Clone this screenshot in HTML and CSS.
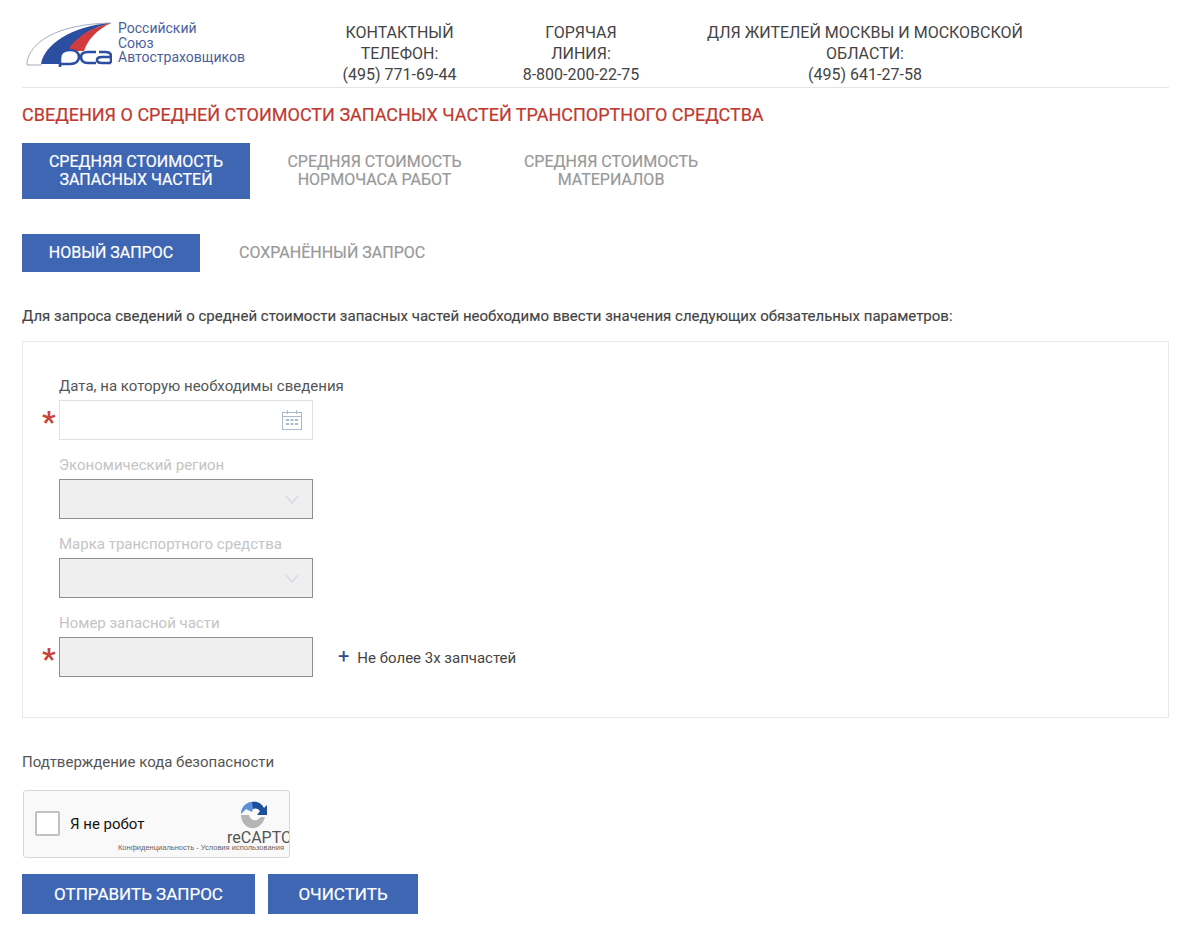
FILE: index.html
```html
<!DOCTYPE html>
<html lang="ru">
<head>
  <meta charset="UTF-8">
  <title>Сведения о средней стоимости запасных частей</title>
  <link rel="stylesheet" href="styles.css">
</head>
<body>
  <div class="page">
    <header class="header">
      <div class="logo">
        <svg class="logo-mark" width="86" height="46" viewBox="0 0 86 46">
          <path d="M1 42 C3 22 30 3 85 2" fill="none" stroke="#8b97b5" stroke-width="0.8"/>
          <path d="M1 42 V44 H16" fill="none" stroke="#8b97b5" stroke-width="0.8"/>
          <path d="M15 43 C18 24 45 5 85 2 C62 8 45 18 38 43 Z" fill="#2b4ea0"/>
          <path d="M36 43 C40 24 58 8 85 2 C70 9 61 20 58 30 H48 C44 30 40 36 39 43 Z" fill="#d23b3d"/>
          <path d="M34 46 V37 C34 31 38 29 44 29 C50 29 53 32 53 36 C53 40 50 43 44 43 H35" fill="#fff" stroke="#2b4ea0" stroke-width="2.6"/>
          <path d="M70 31 H62 C57 31 55 33 55 36 C55 40 57 42 62 42 H70" fill="none" stroke="#2b4ea0" stroke-width="2.6"/>
          <path d="M85 42 V35 C85 32 83 31 79 31 H73 M85 36 H76 C73 36 71 37 71 39 C71 41 73 42 76 42 H85" fill="none" stroke="#2b4ea0" stroke-width="2.6"/>
        </svg>
        <div class="logo-text">Российский<br>Союз<br>Автостраховщиков</div>
      </div>
      <div class="contact contact-first">Контактный телефон:<span>(495) 771-69-44</span></div>
      <div class="contact contact-hot">Горячая линия:<span>8-800-200-22-75</span></div>
      <div class="contact contact-msk">Для жителей Москвы и Московской области:<span>(495) 641-27-58</span></div>
    </header>

    <h1 class="title">Сведения о средней стоимости запасных частей транспортного средства</h1>

    <div class="tabs">
      <div class="tab tab-parts active">Средняя стоимость<br>запасных частей</div>
      <div class="tab tab-hours">Средняя стоимость<br>нормочаса работ</div>
      <div class="tab tab-mat">Средняя стоимость<br>материалов</div>
    </div>

    <div class="subtabs">
      <div class="subtab active">Новый запрос</div>
      <div class="subtab saved">Сохранённый запрос</div>
    </div>

    <p class="intro">Для запроса сведений о средней стоимости запасных частей необходимо ввести значения следующих обязательных параметров:</p>

    <div class="form-box">
      <div class="field">
        <label>Дата, на которую необходимы сведения</label>
        <div class="row">
          <span class="star">*</span>
          <div class="input">
            <svg class="calendar" width="22" height="22" viewBox="0 0 22 22" fill="none" stroke="#a9b9cf" stroke-width="1">
              <rect x="1.5" y="3.5" width="19" height="17"/>
              <path d="M1.5 7.5 H20.5 M6.5 1 V5 M15.5 1 V5" />
              <path d="M5 11 H8 M9.5 11 H12.5 M14 11 H17 M5 15 H8 M9.5 15 H12.5 M14 15 H17" stroke-width="2.2"/>
            </svg>
          </div>
        </div>
      </div>
      <div class="field off">
        <label>Экономический регион</label>
        <div class="row">
          <div class="input disabled">
            <svg class="chevron" width="14" height="9" viewBox="0 0 14 9" fill="none" stroke="#d5dae3" stroke-width="1.4"><path d="M1 1 L7 8 L13 1"/></svg>
          </div>
        </div>
      </div>
      <div class="field off">
        <label>Марка транспортного средства</label>
        <div class="row">
          <div class="input disabled">
            <svg class="chevron" width="14" height="9" viewBox="0 0 14 9" fill="none" stroke="#d5dae3" stroke-width="1.4"><path d="M1 1 L7 8 L13 1"/></svg>
          </div>
        </div>
      </div>
      <div class="field off last">
        <label>Номер запасной части</label>
        <div class="row">
          <span class="star">*</span>
          <div class="input disabled"></div>
          <div class="add"><span class="plus">+</span>Не более 3х запчастей</div>
        </div>
      </div>
    </div>

    <div class="captcha-label">Подтверждение кода безопасности</div>
    <div class="captcha">
      <div class="check"></div>
      <div class="robot">Я не робот</div>
      <div class="brand">
        <svg class="recaptcha-icon" width="30" height="30" viewBox="0 0 30 30">
          <path d="M3 14 C3 6 10 1 17 2 L14 12 L8 9 Z" fill="#5b8fd6"/>
          <path d="M14 2 C20 1 24 4 26 8 L29 5 V15 H19 L22 11 C20 8 17 8 15 9 Z" fill="#1f4f9c"/>
          <path d="M3 15 H11 C12 19 15 21 19 20 L23 17 L27 17 C25 25 19 29 13 28 C7 27 3 21 3 15 Z" fill="#b5b5b5"/>
        </svg>
        <div class="recaptcha-word">reCAPTC</div>
      </div>
      <div class="privacy">Конфиденциальность - Условия использования</div>
    </div>

    <div class="actions">
      <div class="btn btn-send">Отправить запрос</div>
      <div class="btn btn-clear">Очистить</div>
    </div>
  </div>
</body>
</html>
```

FILE: styles.css
```css
* {
  box-sizing: border-box;
}
body {
  margin: 0;
  background: #fff;
  font-family: "Roboto", "Liberation Sans", sans-serif;
  color: #444;
}
.page {
  width: 1200px;
  height: 927px;
  padding: 0 31px 0 22px;
  overflow: hidden;
}
.header {
  display: flex;
  height: 88px;
  border-bottom: 1px solid #e6e6e6;
}
.logo {
  display: flex;
  width: 284px;
  padding: 21px 0 0 4px;
}
.logo-mark {
  margin-right: 6px;
}
.logo-text {
  font-size: 14px;
  line-height: 14.5px;
  color: #4c5f9c;
}
.contact {
  padding-top: 22px;
  font-size: 16px;
  line-height: 21px;
  text-align: center;
  text-transform: uppercase;
  color: #444;
}
.contact span {
  display: block;
}
.contact-first { width: 187px; }
.contact-hot { width: 134px; margin-left: 21px; }
.contact-msk { width: 392px; margin-left: 21px; }
.title {
  margin: 17px 0 0;
  font-size: 18px;
  line-height: 20px;
  font-weight: 400;
  text-transform: uppercase;
  color: #c0392f;
  -webkit-text-stroke: 0.2px #c0392f;
}
.tabs {
  display: flex;
  margin-top: 18px;
}
.tab {
  height: 56px;
  padding-top: 10px;
  font-size: 16px;
  line-height: 18px;
  text-align: center;
  text-transform: uppercase;
  color: #999;
  -webkit-text-stroke: 0.2px #999;
}
.tab.active {
  background: #3f66b2;
  color: #fff;
  -webkit-text-stroke: 0.2px #fff;
}
.tab-parts { width: 228px; }
.tab-hours { width: 249px; }
.tab-mat { width: 224px; }
.subtabs {
  display: flex;
  margin-top: 35px;
}
.subtab {
  height: 38px;
  font-size: 16px;
  line-height: 38px;
  text-transform: uppercase;
  color: #999;
  -webkit-text-stroke: 0.2px #999;
}
.subtab.active {
  width: 178px;
  background: #3f66b2;
  color: #fff;
  text-align: center;
  -webkit-text-stroke: 0.2px #fff;
}
.subtab.saved {
  margin-left: 39px;
}
.intro {
  margin: 35px 0 0;
  font-size: 15px;
  line-height: 18px;
  color: #444;
  -webkit-text-stroke: 0.15px #444;
}
.form-box {
  height: 377px;
  margin-top: 16px;
  padding: 35px 0 0 36px;
  border: 1px solid #e8e8e8;
}
.field {
  margin-bottom: 16px;
}
.field label {
  display: block;
  height: 23px;
  font-size: 15px;
  line-height: 18px;
  color: #555;
}
.field.off label {
  color: #c4c4c4;
}
.row {
  display: flex;
  align-items: center;
  position: relative;
}
.star {
  position: absolute;
  left: -17px;
  top: 7px;
  font-size: 30px;
  line-height: 30px;
  font-weight: 700;
  color: #c8453b;
}
.input {
  display: flex;
  align-items: center;
  justify-content: flex-end;
  width: 254px;
  height: 40px;
  border: 1px solid #dde1e8;
}
.input.disabled {
  background: #efefef;
  border: 2px solid #8e8e8e;
  border-width: 1.5px;
}
.calendar {
  margin-right: 9px;
}
.chevron {
  margin-right: 13px;
}
.add {
  margin-left: 25px;
  font-size: 15px;
  color: #444;
}
.plus {
  margin-right: 8px;
  font-size: 20px;
  line-height: 18px;
  color: #2f4a8c;
}
.captcha-label {
  margin-top: 35px;
  font-size: 15px;
  line-height: 18px;
  color: #555;
}
.captcha {
  display: flex;
  position: relative;
  width: 267px;
  height: 68px;
  margin: 19px 0 0 1px;
  background: #f9f9f9;
  border: 1px solid #d6d6d6;
  border-radius: 3px;
  overflow: hidden;
}
.check {
  width: 25px;
  height: 25px;
  margin: 20px 0 0 11px;
  background: #fff;
  border: 2px solid #c1c1c1;
  border-radius: 2px;
}
.robot {
  margin: 24px 0 0 10px;
  font-size: 15px;
  line-height: 18px;
  color: #111;
}
.brand {
  position: absolute;
  left: 203px;
  top: 9px;
  width: 70px;
}
.recaptcha-icon {
  display: block;
  margin-left: 11px;
}
.recaptcha-word {
  margin-top: -1px;
  font-size: 16px;
  line-height: 18px;
  color: #555;
}
.privacy {
  position: absolute;
  left: 94px;
  top: 52px;
  font-family: "Liberation Sans", sans-serif;
  font-size: 7.5px;
  line-height: 10px;
  white-space: nowrap;
  color: #666;
}
.actions {
  display: flex;
  gap: 13px;
  margin-top: 16px;
}
.btn {
  height: 40px;
  font-size: 17px;
  line-height: 40px;
  text-align: center;
  text-transform: uppercase;
  color: #fff;
  background: #3f66b2;
  -webkit-text-stroke: 0.2px #fff;
}
.btn-send { width: 233px; }
.btn-clear { width: 150px; }
```
